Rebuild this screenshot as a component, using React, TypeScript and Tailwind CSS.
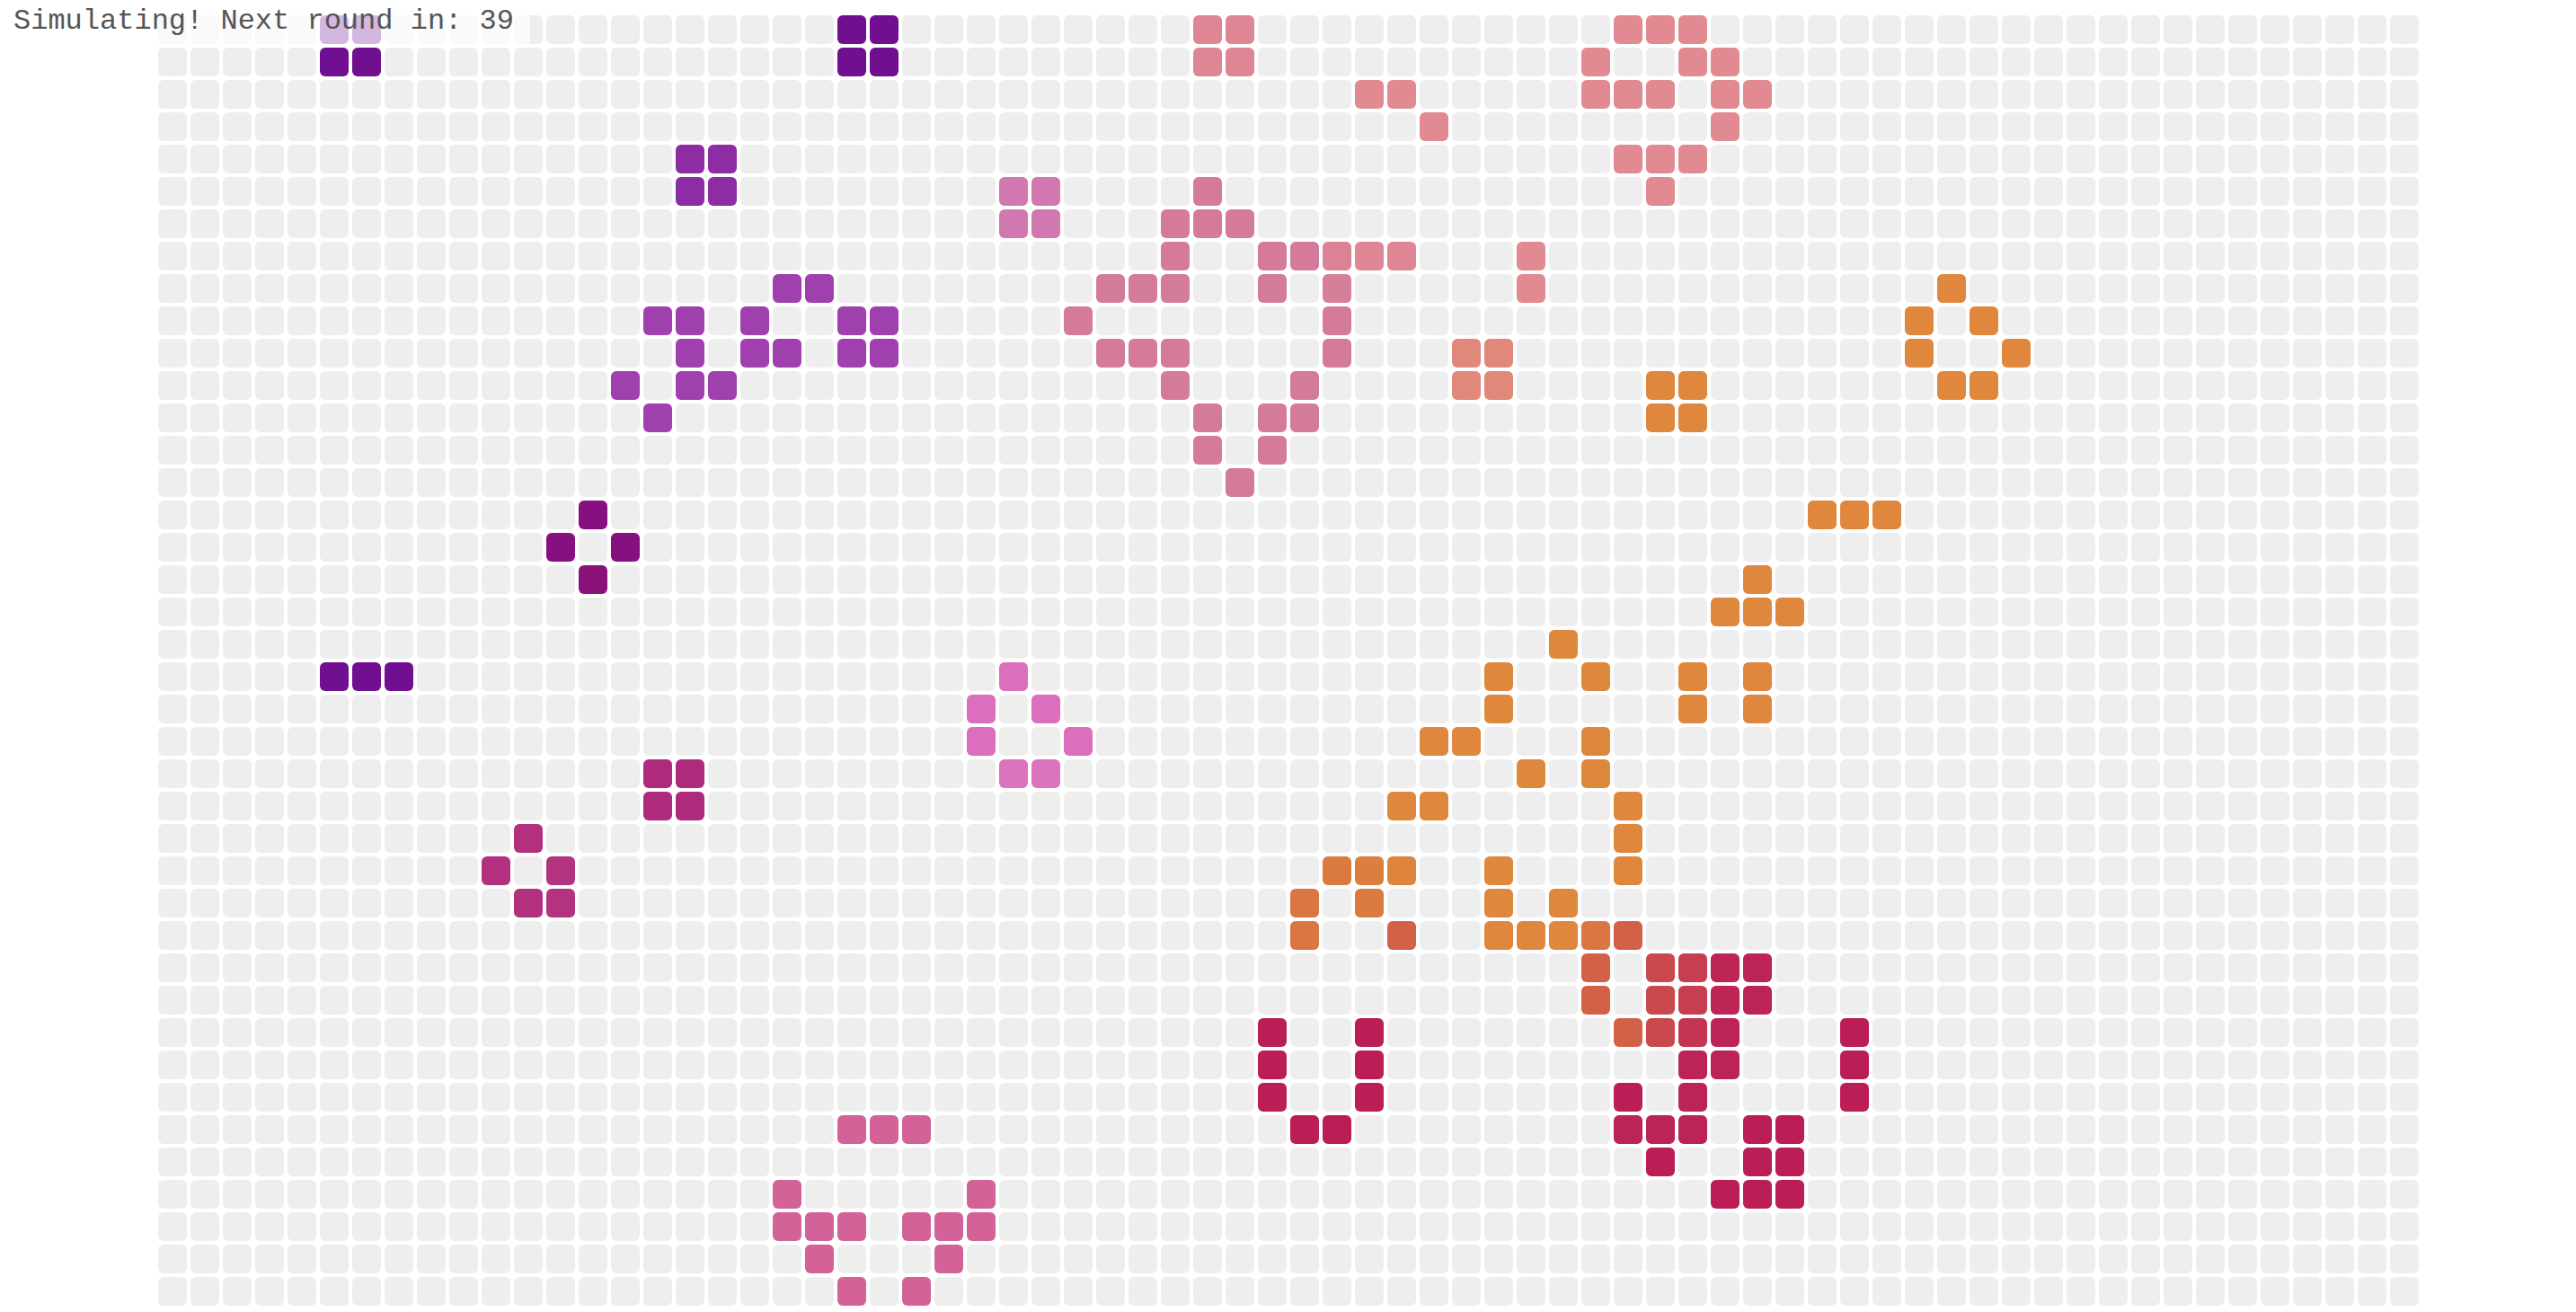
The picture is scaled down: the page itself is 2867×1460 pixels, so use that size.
const COLS = 70;
const ROWS = 40;

// Every live cell: [row, column, colour class]
const PALETTE = {
  purple: "bg-[#700f8f]",
  violet: "bg-[#8e2ca4]",
  orchid: "bg-[#a040af]",
  magenta: "bg-[#86107f]",
  magenta2: "bg-[#8c127b]",
  plum: "bg-[#ad2a7c]",
  plum2: "bg-[#b2307e]",
  plum3: "bg-[#b33380]",
  lilac: "bg-[#d178b0]",
  rose: "bg-[#d47b9b]",
  rose2: "bg-[#d77e99]",
  rose3: "bg-[#db8394]",
  blush0: "bg-[#de8694]",
  blush: "bg-[#e28a91]",
  salmon: "bg-[#e0887a]",
  diamond: "bg-[#db6fbd]",
  diamond2: "bg-[#dc73be]",
  pink: "bg-[#d36299]",
  orange: "bg-[#df873d]",
  orange1: "bg-[#de843d]",
  orange2: "bg-[#dc7f3e]",
  orange3: "bg-[#db7a3f]",
  orange4: "bg-[#d97641]",
  coral: "bg-[#d26147]",
  brick: "bg-[#ca494c]",
  red: "bg-[#c63f50]",
  red2: "bg-[#c33551]",
  crimson1: "bg-[#bd2654]",
  crimson2: "bg-[#bc2356]",
  crimson: "bg-[#bb1e57]",
} as const;

type Key = keyof typeof PALETTE;

const CLUSTERS: [Key, [number, number[]][]][] = [
  ["purple", [[0, [5, 6, 21, 22]], [1, [5, 6, 21, 22]], [20, [5, 6, 7]]]],
  ["violet", [[4, [16, 17]], [5, [16, 17]]]],
  ["orchid", [[8, [19, 20]], [9, [15, 16, 18, 21, 22]], [10, [16, 18, 19, 21, 22]], [11, [14, 16, 17]], [12, [15]]]],
  ["magenta", [[15, [13]], [16, [12, 14]]]],
  ["magenta2", [[17, [13]]]],
  ["plum", [[23, [15, 16]], [24, [15, 16]]]],
  ["plum2", [[25, [11]], [26, [10]], [27, [11]]]],
  ["plum3", [[26, [12]], [27, [12]]]],
  ["lilac", [[5, [26, 27]], [6, [26, 27]]]],
  ["rose", [[5, [32]], [6, [31, 32, 33]], [7, [31, 34, 35]], [8, [29, 30, 31, 34]], [9, [28, 36]], [10, [29, 30, 31, 36]], [11, [31, 35]], [12, [32, 34, 35]], [13, [32, 34]], [14, [33]]]],
  ["rose2", [[8, [36]]]],
  ["rose3", [[7, [36]]]],
  ["blush0", [[0, [32, 33]], [1, [32, 33]], [7, [37, 38]]]],
  ["blush", [[0, [45, 46, 47]], [1, [44, 47, 48]], [2, [37, 38, 44, 45, 46, 48, 49]], [3, [39, 48]], [4, [45, 46, 47]], [5, [46]], [7, [42]], [8, [42]]]],
  ["salmon", [[10, [40, 41]], [11, [40, 41]]]],
  ["diamond", [[20, [26]], [21, [25, 27]], [22, [25, 28]]]],
  ["diamond2", [[23, [26, 27]]]],
  ["pink", [[34, [21, 22, 23]], [36, [19, 25]], [37, [19, 20, 21, 23, 24, 25]], [38, [20, 24]], [39, [21, 23]]]],
  ["orange", [
    [8, [55]], [9, [54, 56]], [10, [54, 57]], [11, [46, 47, 55, 56]], [12, [46, 47]], [15, [51, 52, 53]],
    [17, [49]], [18, [48, 49, 50]], [19, [43]], [20, [41, 44, 47, 49]], [21, [41, 47, 49]], [22, [39, 40, 44]],
    [23, [42, 44]], [24, [38, 39, 45]], [25, [45]], [26, [41, 45]], [27, [41, 43]], [28, [41, 42, 43]],
  ]],
  ["orange1", [[26, [38]]]],
  ["orange2", [[26, [37]]]],
  ["orange3", [[26, [36]], [27, [37]]]],
  ["orange4", [[27, [35]], [28, [35, 44]]]],
  ["coral", [[28, [38, 45]], [29, [44]], [30, [44]], [31, [45]]]],
  ["brick", [[29, [46]], [30, [46]], [31, [46]]]],
  ["red", [[29, [47]], [30, [47]]]],
  ["red2", [[31, [47]]]],
  ["crimson1", [[29, [48]], [30, [48]]]],
  ["crimson2", [[29, [49]], [30, [49]], [31, [48]], [32, [47, 48]], [33, [47]], [34, [45, 46, 47]]]],
  ["crimson", [
    [31, [34, 37, 52]], [32, [34, 37, 52]], [33, [34, 37, 45, 52]], [34, [35, 36, 49, 50]],
    [35, [46, 49, 50]], [36, [48, 49, 50]],
  ]],
];

const live = new Map<string, string>();
for (const [key, rows] of CLUSTERS) {
  for (const [row, cols] of rows) {
    for (const col of cols) live.set(`${row}-${col}`, PALETTE[key]);
  }
}

const cells = Array.from({ length: ROWS * COLS }, (_, i) => {
  const row = Math.floor(i / COLS);
  const col = i % COLS;
  return { id: i, color: live.get(`${row}-${col}`) ?? "bg-[#eeeeee]" };
});

export default function App() {
  return (
    <div className="relative min-h-screen bg-white">
      <div className="absolute left-0 top-0 z-10 bg-white/70 py-[6.4px] pl-[15px] pr-[18px] font-['Liberation_Mono',monospace] text-[32px] leading-[36px] text-[#555555] whitespace-pre">
        Simulating! Next round in: 39
      </div>
      <div className="flex justify-center pt-[17px]">
        <div className="grid grid-cols-[repeat(70,32px)] auto-rows-[32px] gap-1">
          {cells.map((cell) => (
            <div key={cell.id} className={`rounded-md ${cell.color}`} />
          ))}
        </div>
      </div>
    </div>
  );
}
